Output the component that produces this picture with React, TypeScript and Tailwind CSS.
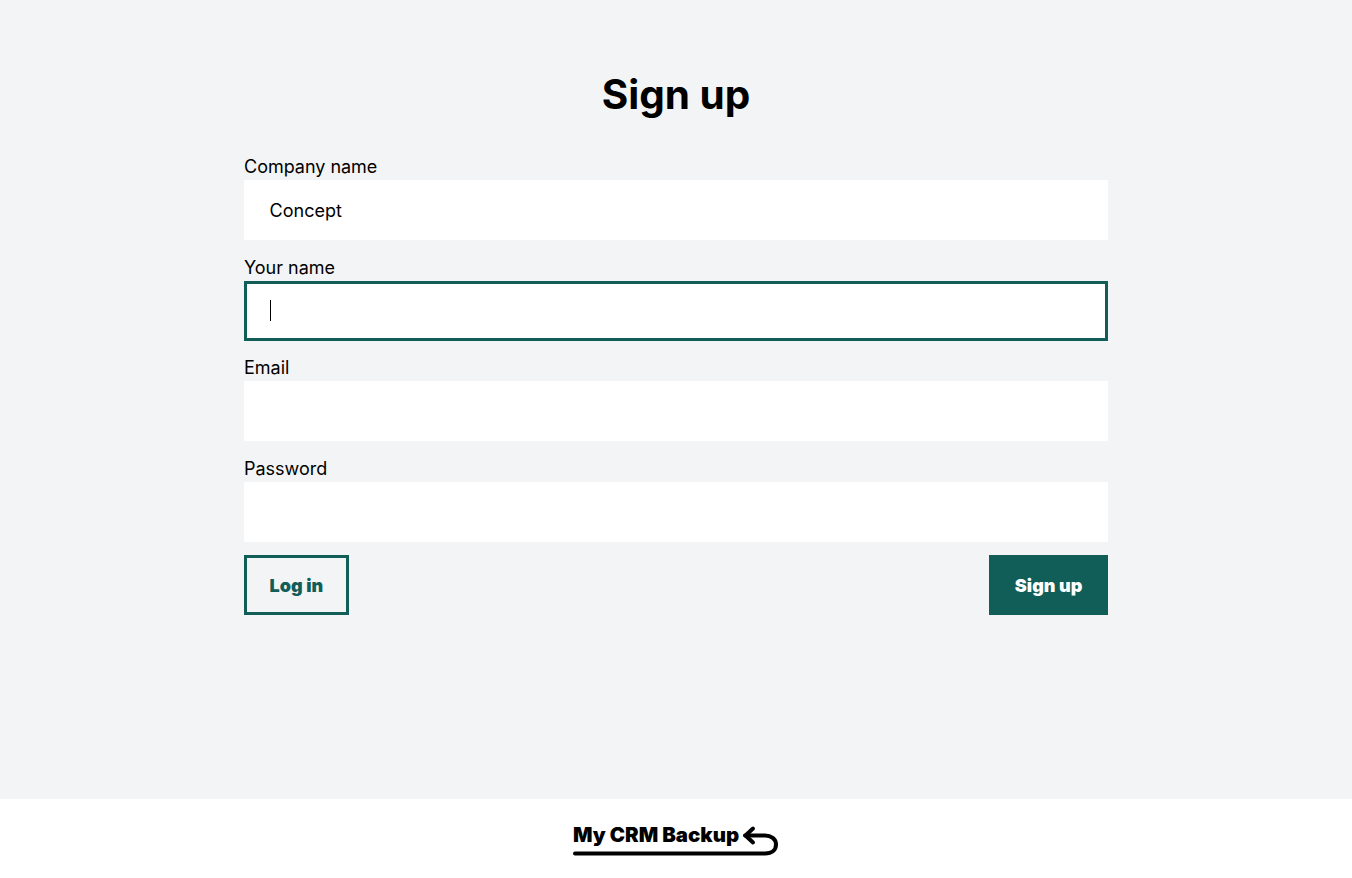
export default function App() {
  const fields = [
    { label: "Company name", value: "Concept" },
    { label: "Your name", value: "", focused: true },
    { label: "Email", value: "" },
    { label: "Password", value: "" },
  ];
  return (
    <div className="min-h-[878px] flex flex-col bg-[#f3f4f6] text-black font-['Inter',sans-serif]">
      <main className="h-[799px] w-[864px] mx-auto pt-[69px]">
        <h1 className="text-[40.5px] leading-[52px] font-bold text-center">Sign up</h1>
        <form className="mt-[31px] flex flex-col gap-[12.67px]">
          {fields.map((f) => (
            <label key={f.label} className="block">
              <span className="block text-[18px] leading-[26px] pt-[2px] tracking-[-0.02px]">{f.label}</span>
              {f.focused ? (
                <div className="h-[60px] bg-white border-[3px] border-[#115e59] px-[22.6px] flex items-center">
                  <div className="w-px h-[21px] bg-black" />
                </div>
              ) : (
                <div className="h-[60px] bg-white px-[25.6px] flex items-center text-[18px]">{f.value}</div>
              )}
            </label>
          ))}
          <div className="flex justify-between">
            <button type="button" className="h-[60px] px-[22.6px] pt-[1px] border-[3px] border-[#115e59] text-[#115e59] text-[18px] font-black">
              Log in
            </button>
            <button type="button" className="h-[60px] px-[25.6px] pt-[1px] bg-[#115e59] text-white text-[18px] font-black">
              Sign up
            </button>
          </div>
        </form>
      </main>
      <footer className="h-[79px] bg-white flex justify-center items-start pt-[24px]">
        <div className="relative flex items-start h-[34px] w-[206px]">
          <span className="text-[20.4px] leading-[24px] font-black">My CRM Backup</span>
          <svg className="absolute left-0 top-0" width="206" height="36" viewBox="0 0 206 36" fill="none" stroke="black" strokeWidth="4" strokeLinecap="round" strokeLinejoin="round">
            <path d="M2 30.5H192C199 30.5 203 27 203 21.5C203 16 198 12.5 192 12.5H172" />
            <path d="M180 5.5L172.5 12.5L180 19.5" />
          </svg>
        </div>
      </footer>
    </div>
  );
}
